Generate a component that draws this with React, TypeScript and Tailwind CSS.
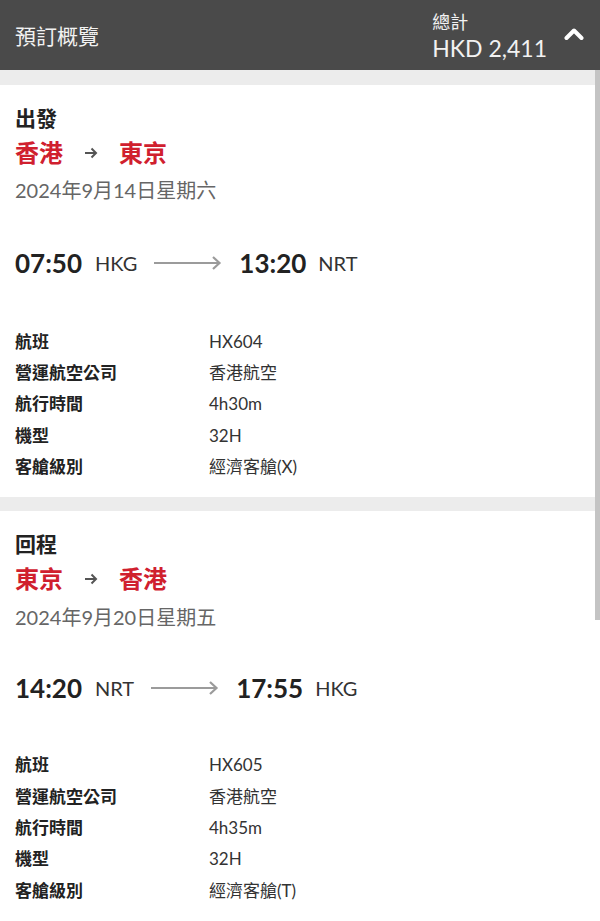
import React from "react";

const FONT = { fontFamily: 'Lato, "Noto Sans CJK TC", "Noto Sans", sans-serif' };

type Leg = {
  title: string;
  from: string;
  to: string;
  date: string;
  depTime: string;
  depCode: string;
  arrTime: string;
  arrCode: string;
  details: [string, string][];
};

const legs: Leg[] = [
  {
    title: "出發",
    from: "香港",
    to: "東京",
    date: "2024年9月14日星期六",
    depTime: "07:50",
    depCode: "HKG",
    arrTime: "13:20",
    arrCode: "NRT",
    details: [
      ["航班", "HX604"],
      ["營運航空公司", "香港航空"],
      ["航行時間", "4h30m"],
      ["機型", "32H"],
      ["客艙級別", "經濟客艙(X)"],
    ],
  },
  {
    title: "回程",
    from: "東京",
    to: "香港",
    date: "2024年9月20日星期五",
    depTime: "14:20",
    depCode: "NRT",
    arrTime: "17:55",
    arrCode: "HKG",
    details: [
      ["航班", "HX605"],
      ["營運航空公司", "香港航空"],
      ["航行時間", "4h35m"],
      ["機型", "32H"],
      ["客艙級別", "經濟客艙(T)"],
    ],
  },
];

function LongArrow() {
  return (
    <svg width="70" height="16" viewBox="0 0 70 16" className="mx-[16px]">
      <line x1="1" y1="8" x2="66" y2="8" stroke="#9b9b9b" strokeWidth="2.2" />
      <polyline points="60,2 66.5,8 60,14" fill="none" stroke="#9b9b9b" strokeWidth="2.2" />
    </svg>
  );
}

function SmallArrow() {
  return (
    <svg width="16" height="16" viewBox="0 0 16 16" className="mx-[20px]">
      <line x1="2" y1="8" x2="13" y2="8" stroke="#555" strokeWidth="2" />
      <polyline points="8.5,3.5 13,8 8.5,12.5" fill="none" stroke="#555" strokeWidth="2" />
    </svg>
  );
}

function LegSection({ leg, second }: { leg: Leg; second?: boolean }) {
  return (
    <section className={`bg-white px-[15px] pt-[19px] ${second ? "pb-[17px]" : "pb-[15px]"}`}>
      <div className="h-[28px] text-[21px] leading-[28px] font-bold text-[#222]">{leg.title}</div>
      <div className="mt-[5px] flex h-[32px] items-center text-[24px] leading-[32px] font-bold text-[#d0202e]">
        <span>{leg.from}</span>
        <SmallArrow />
        <span>{leg.to}</span>
      </div>
      <div className={`${second ? "mt-[9px]" : "mt-[8px]"} h-[26px] text-[20px] leading-[26px] text-[#666]`}>
        {leg.date}
      </div>
      <div className={`${second ? "mt-[42px]" : "mt-[44px]"} flex h-[32px] items-center text-[#222]`}>
        <span className="text-[26px] font-bold leading-[32px]">{leg.depTime}</span>
        <span className="ml-[13px] text-[20px] leading-[32px] text-[#333]">{leg.depCode}</span>
        <LongArrow />
        <span className="text-[26px] font-bold leading-[32px]">{leg.arrTime}</span>
        <span className="ml-[12px] text-[20px] leading-[32px] text-[#333]">{leg.arrCode}</span>
      </div>
      <div className={`${second ? "mt-[45px]" : "mt-[47px]"} flex flex-col`}>
        {leg.details.map(([k, v]) => (
          <div key={k} className="flex h-[31.3px] items-center">
            <span className="w-[194px] text-[17px] font-bold text-[#222]">{k}</span>
            <span className="text-[17px] text-[#333]">{v}</span>
          </div>
        ))}
      </div>
    </section>
  );
}

export default function App() {
  return (
    <div className="relative min-h-[921px] w-[600px] overflow-hidden bg-[#ececec]" style={FONT}>
      <header className="flex h-[70px] items-center bg-[#4a4a4a] pl-[15px] pr-[16px] text-[#f2f2f2]">
        <div className="flex-1 text-[21px] leading-none">預訂概覽</div>
        <div className="flex flex-col pt-[2px]">
          <span className="text-[18px] leading-[24px]">總計</span>
          <span className="text-[23px] leading-[28px]">HKD 2,411</span>
        </div>
        <svg width="20" height="16" viewBox="0 0 20 16" className="ml-[17px] mb-[2px]">
          <polyline
            points="2.5,12 10,4.5 17.5,12"
            fill="none"
            stroke="#ffffff"
            strokeWidth="4"
            strokeLinecap="round"
            strokeLinejoin="round"
          />
        </svg>
      </header>
      <div className="h-[15px]" />
      <LegSection leg={legs[0]} />
      <div className="h-[14px]" />
      <LegSection leg={legs[1]} second />
      <div className="absolute right-0 top-[70px] h-[550px] w-[5px] bg-[#c4c4c4]" />
    </div>
  );
}
